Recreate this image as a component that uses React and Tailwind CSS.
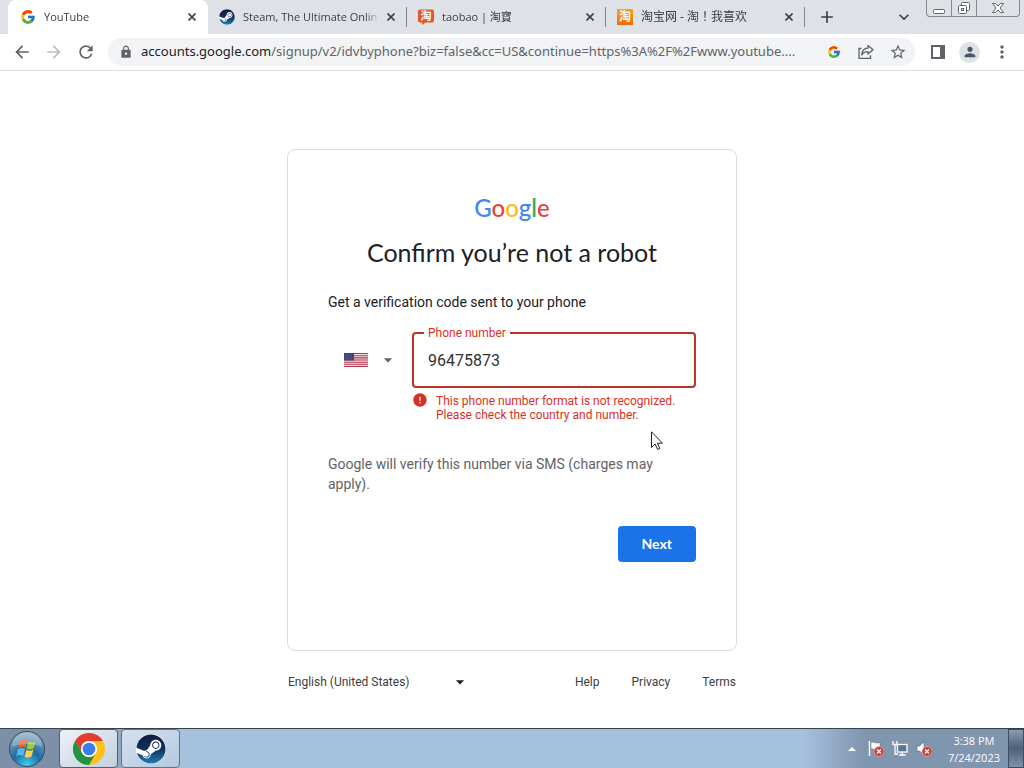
import { FaSteam } from "react-icons/fa";
import { FcGoogle } from "react-icons/fc";
import {
  MdAdd,
  MdArrowBack,
  MdArrowDropDown,
  MdArrowForward,
  MdError,
  MdExpandMore,
  MdLock,
  MdMoreVert,
  MdPerson,
  MdRefresh,
  MdStarBorder,
} from "react-icons/md";

const tabs = [
  { title: "YouTube", icon: <FcGoogle className="size-4" />, active: true },
  { title: "Steam, The Ultimate Onlin", icon: <SteamIcon className="size-4" /> },
  { title: "taobao | 淘寶", icon: <TaobaoBubble /> },
  { title: "淘宝网 - 淘！我喜欢", icon: <TaobaoSquare />, size: "text-xs" },
];

function SteamIcon({ className }) {
  return (
    <span className={`flex shrink-0 rounded-full bg-white ${className}`}>
      <FaSteam className="size-full fill-[url(#steam)]" />
    </span>
  );
}

function TaobaoBubble() {
  return (
    <svg viewBox="0 0 16 16" className="size-4">
      <path
        d="M2 .5h12a2 2 0 0 1 2 2v9a2 2 0 0 1-2 2H7.500L4.500 16l-.5-2.500H2a2 2 0 0 1-2-2v-9a2 2 0 0 1 2-2z"
        fill="#e4572e"
      />
      <text x="8" y="11" textAnchor="middle" fontSize="11" fontWeight="700" fill="#fff">
        淘
      </text>
    </svg>
  );
}

function TaobaoSquare() {
  return (
    <span className="flex size-4 items-center justify-center bg-linear-to-b from-[#f9a01b] to-[#ee6c0c] text-xs leading-4 font-bold text-white">
      淘
    </span>
  );
}

function Tab({ title, icon, active, size = "text-[11px]" }) {
  return (
    <div
      className={
        active
          ? "flex h-full w-[200px] items-center rounded-t-lg bg-white pr-2 pl-3"
          : "flex h-full w-[199px] items-center pr-2 pl-[11px]"
      }
    >
      <span className="flex shrink-0">{icon}</span>
      <span
        className={`ml-2 flex-1 overflow-hidden mask-r-from-90% leading-5 whitespace-nowrap ${size}`}
      >
        {title}
      </span>
      <button aria-label="Close tab" className="ml-1 flex size-4 items-center justify-center">
        <svg viewBox="0 0 8 8" className="size-2" stroke="currentColor" strokeWidth="1.6">
          <path d="M.5.5l7 7M7.500.5l-7 7" />
        </svg>
      </button>
      {!active && <span className="-mr-2 ml-[7px] h-5 w-px bg-[#80868b]" />}
    </div>
  );
}

function WindowButtons() {
  return (
    <div className="mr-1 flex h-[17px] self-start rounded-b border border-t-0 border-[#85898f] text-[#606468]">
      <button aria-label="Minimize" className="flex w-[25px] items-center justify-center border-r border-[#85898f]">
        <svg viewBox="0 0 14 14" className="size-3.5" fill="#fff" stroke="currentColor">
          <rect x="1.5" y="8.5" width="11" height="4" rx="1" />
        </svg>
      </button>
      <button aria-label="Restore" className="flex w-[25px] items-center justify-center border-r border-[#85898f]">
        <svg viewBox="0 0 14 14" className="size-3.5" fill="#fff" stroke="currentColor">
          <rect x="4.5" y="1.5" width="8" height="8" rx="1" />
          <rect x="1.5" y="4.5" width="8" height="8" rx="1" />
          <rect x="4.5" y="7.5" width="2" height="2" />
        </svg>
      </button>
      <button aria-label="Close" className="flex w-[42px] items-center justify-center">
        <svg viewBox="0 0 14 14" className="size-3.5" fill="#fff" stroke="currentColor">
          <path d="M1.5 2.5h3.2L7 5l2.3-2.5h3.2L9 7l3.5 4.5H9.3L7 9l-2.3 2.5H1.5L5 7z" />
        </svg>
      </button>
    </div>
  );
}

function TabStrip() {
  return (
    <div className="flex h-[34px] items-center bg-[#dee1e6] pl-2 font-['Open_Sans','Noto_Sans_CJK_TC',sans-serif] text-[#3c4043]">
      {tabs.map((tab) => (
        <Tab key={tab.title} {...tab} />
      ))}
      <button aria-label="New tab" className="ml-3">
        <MdAdd className="size-5" />
      </button>
      <button aria-label="Search tabs" className="mr-3 ml-auto">
        <MdExpandMore className="size-5" />
      </button>
      <WindowButtons />
    </div>
  );
}

function Toolbar() {
  return (
    <div className="flex h-[37px] items-center border-b border-[#dadce0] bg-white px-3 text-[#5f6368]">
      <button aria-label="Back">
        <MdArrowBack className="size-5" />
      </button>
      <button aria-label="Forward" className="ml-3 text-[#babcbe]">
        <MdArrowForward className="size-5" />
      </button>
      <button aria-label="Reload" className="ml-3">
        <MdRefresh className="size-5" />
      </button>
      <div className="ml-3 flex h-7 min-w-0 flex-1 items-center rounded-full bg-[#f1f3f4] pr-2 pl-[11px]">
        <MdLock className="size-3.5 shrink-0" />
        <p className="ml-2 flex-1 truncate font-['Noto_Sans',sans-serif] text-[13px]">
          <span className="text-[#202124]">accounts.google.com</span>
          /signup/v2/idvbyphone?biz=false&amp;cc=US&amp;continue=https%3A%2F%2Fwww.youtube....
        </p>
        <FcGoogle className="ml-2 size-3.5 shrink-0" />
        <button aria-label="Share" className="ml-4">
          <svg viewBox="0 0 18 18" className="size-[18px]" fill="none" stroke="currentColor" strokeWidth="1.3">
            <path d="M4.5 5.5H2v9.8h11.5v-3" />
            <path d="M11 2.5l5 4.3-5 4.3V8.7c-3 0-5 1-6.300 3.300C5 8 7 5.400 11 5z" strokeLinejoin="round" />
          </svg>
        </button>
        <button aria-label="Bookmark" className="ml-3.5">
          <MdStarBorder className="size-[18px]" />
        </button>
      </div>
      <button aria-label="Side panel" className="ml-4">
        <svg viewBox="0 0 14 14" className="size-3.5" fill="currentColor">
          <path d="M0 0h14v14H0zM2 2v10h7V2z" fillRule="evenodd" />
        </svg>
      </button>
      <button aria-label="Profile" className="ml-3.5 flex size-[21px] items-center justify-center rounded-full bg-[#dee1e6] text-[#4a5568]">
        <MdPerson className="size-4" />
      </button>
      <button aria-label="Menu" className="ml-3">
        <MdMoreVert className="size-5" />
      </button>
    </div>
  );
}

function UsFlag() {
  return (
    <svg viewBox="0 0 24 14" className="h-3.5 w-6">
      <rect width="24" height="14" fill="#f3dfe2" />
      <path
        d="M0 .5h24M0 2.700h24M0 4.900h24M0 7h24M0 9.200h24M0 11.300h24M0 13.500h24"
        stroke="#b5374b"
        strokeWidth="1.100"
      />
      <rect width="10" height="7.500" fill="#3b4476" />
      <path d="M1 2h8M1 4h8M1 6h8" stroke="#8087ab" strokeWidth=".6" strokeDasharray=".8 .8" />
    </svg>
  );
}

function GoogleLogo() {
  return (
    <p className="text-center font-[Lato,sans-serif] text-2xl leading-8 font-medium">
      <span className="text-[#4285f4]">G</span>
      <span className="text-[#ea4335]">o</span>
      <span className="text-[#fbbc05]">o</span>
      <span className="text-[#4285f4]">g</span>
      <span className="text-[#34a853]">l</span>
      <span className="text-[#ea4335]">e</span>
    </p>
  );
}

function Cursor() {
  return (
    <svg viewBox="0 0 12 19" className="absolute top-[281px] left-[363px] h-[19px] w-3">
      <path
        d="M.5.800v15.700l3.600-3.500 2.500 5.500 2.300-1-2.500-5.300h5z"
        fill="#fff"
        stroke="#222"
      />
    </svg>
  );
}

function SignupCard() {
  return (
    <form className="relative flex min-h-[502px] flex-col rounded-lg border border-[#dadce0] px-10 pt-[42px]">
      <GoogleLogo />
      <h1 className="mt-3 text-center font-[Lato,sans-serif] text-[25px] leading-8">
        Confirm you’re not a robot
      </h1>
      <p className="mt-6 text-sm leading-5">Get a verification code sent to your phone</p>
      <div className="mt-5 flex">
        <button
          type="button"
          aria-label="Country: United States"
          className="flex h-14 w-[84px] items-center gap-2.5 pl-4 text-[#5f6368]"
        >
          <UsFlag />
          <MdArrowDropDown className="size-5" />
        </button>
        <div className="relative flex-1">
          <input
            id="phone"
            type="tel"
            defaultValue="96475873"
            aria-describedby="phone-error"
            className="h-14 w-full rounded border-2 border-[#bb3529] px-3.5 text-base text-[#303134] outline-none"
          />
          <label htmlFor="phone" className="absolute -top-[7px] left-3 bg-white px-1 text-xs text-[#d93025]">
            Phone number
          </label>
        </div>
      </div>
      <div id="phone-error" className="mt-1 ml-[84px] flex gap-2 text-xs leading-3.5 text-[#d93025]">
        <MdError className="size-4 shrink-0" />
        <p className="pt-0.5">
          This phone number format is not recognized.
          <br />
          Please check the country and number.
        </p>
      </div>
      <p className="mt-8 text-sm leading-5 text-[#5f6368]">
        Google will verify this number via SMS (charges may apply).
      </p>
      <button
        type="button"
        className="mt-8 h-9 self-end rounded bg-[#1a73e8] px-6 font-[Lato,sans-serif] text-sm font-bold text-white"
      >
        Next
      </button>
      <Cursor />
    </form>
  );
}

function Footer() {
  return (
    <footer className="mt-[19px] flex items-center justify-between px-px text-xs text-[#3c4043]">
      <div className="relative">
        <select aria-label="Language" className="h-6 w-[182px] appearance-none">
          <option>English (United States)</option>
        </select>
        <MdArrowDropDown className="pointer-events-none absolute top-0.5 right-0 size-5 text-[#202124]" />
      </div>
      <nav className="flex gap-8">
        <a href="#help">Help</a>
        <a href="#privacy">Privacy</a>
        <a href="#terms">Terms</a>
      </nav>
    </footer>
  );
}

function StartOrb() {
  return (
    <svg viewBox="0 0 38 38" className="size-[38px]">
      <defs>
        <radialGradient id="orb" cx=".5" cy=".95" r=".9">
          <stop offset="0" stopColor="#3fd0f0" />
          <stop offset=".45" stopColor="#1c6ca3" />
          <stop offset="1" stopColor="#8fa6bb" />
        </radialGradient>
      </defs>
      <circle cx="19" cy="19" r="17.500" fill="url(#orb)" stroke="#34495f" />
      <path d="M12 11c2.500-1.600 4.800-1.600 7-.2l-1.700 7c-2.300-1.400-4.600-1.300-7 .2z" fill="#e8632b" />
      <path d="M20.300 11.500c2.400 1.400 4.800 1.300 7.200-.2l-1.800 7c-2.400 1.500-4.700 1.500-7 .2z" fill="#9ccc3c" />
      <path d="M10 19.300c2.400-1.500 4.700-1.500 7-.2l-1.800 7c-2.300-1.400-4.600-1.300-7 .2z" fill="#5db7ea" />
      <path d="M18.300 19.800c2.400 1.400 4.700 1.300 7.100-.2l-1.800 7c-2.400 1.500-4.700 1.500-7 .2z" fill="#fdd04a" />
      <path d="M4 17a15 15 0 0 1 30 0c-8-4-22-4-30 0z" fill="#fff" opacity=".25" />
    </svg>
  );
}

function ChromeIcon() {
  return (
    <svg viewBox="0 0 48 48" className="size-8">
      <circle cx="24" cy="24" r="24" fill="#fbc116" />
      <path d="M3.200 12A24 24 0 0 1 44.800 12H24a12 12 0 0 0-10.400 18z" fill="#e33b2e" />
      <path d="M3.200 12A24 24 0 0 0 24 48l10.400-18a12 12 0 0 1-20.800 0z" fill="#229342" />
      <circle cx="24" cy="24" r="12" fill="#fff" />
      <circle cx="24" cy="24" r="9.500" fill="#3b7ded" />
    </svg>
  );
}

function RedCross() {
  return (
    <g>
      <circle cx="11" cy="11.500" r="5" fill="#d13a35" stroke="#f0c4c0" strokeWidth=".6" />
      <path d="M9 9.500l4 4M13 9.500l-4 4" stroke="#fff" strokeWidth="1.500" />
    </g>
  );
}

function Tray() {
  return (
    <div className="ml-auto flex h-full items-center font-['Open_Sans',sans-serif] text-[11px] text-white">
      <svg viewBox="0 0 8 4" className="h-1 w-2" fill="#fff">
        <path d="M0 4l4-4 4 4z" />
      </svg>
      <svg viewBox="0 0 16 17" className="ml-3 h-[17px] w-4">
        <path d="M1.500 1v15" stroke="#fff" strokeWidth="1.500" />
        <path d="M3 2.500c3-1.500 4 1.500 9 0v7c-5 1.500-6-1.500-9 0z" fill="#fff" stroke="#44576e" strokeWidth=".5" />
        <RedCross />
      </svg>
      <svg viewBox="0 0 16 17" className="ml-2 h-[17px] w-4" fill="none" stroke="#fff" strokeWidth="1.300">
        <rect x="5.500" y="4.500" width="9.500" height="7.500" fill="#5c7490" />
        <path d="M10.200 12v3M7 15h6.500M1 1v3.500h4V1M3 4.500V14h3" />
      </svg>
      <svg viewBox="0 0 16 17" className="ml-2 h-[17px] w-4">
        <path d="M1 6h2.500L8 2v13l-4.500-4H1z" fill="#fff" stroke="#44576e" strokeWidth=".5" />
        <RedCross />
      </svg>
      <div className="ml-4 text-center leading-[17px]">
        <p>3:38 PM</p>
        <p>7/24/2023</p>
      </div>
      <button
        aria-label="Show desktop"
        className="ml-2 h-full w-4 border border-[#3d4d60] bg-linear-to-b from-[#8b9db3] via-[#4d6078] to-[#7e92ab]"
      />
    </div>
  );
}

function Taskbar() {
  return (
    <div className="flex h-10 items-center border-t border-[#35404d] bg-[linear-gradient(to_right,#7c90a8_60px,#a6c1dd_182px,#a6c1dd_calc(100%-220px),#8095ae_calc(100%-160px))]">
      <button aria-label="Start" className="ml-2">
        <StartOrb />
      </button>
      <button
        aria-label="Chrome"
        className="ml-[13px] flex h-full w-[59px] items-center justify-center rounded-sm border border-[#4d5f75] bg-linear-to-br from-[#eef2f7] to-[#c3d0df]"
      >
        <ChromeIcon />
      </button>
      <button
        aria-label="Steam"
        className="ml-[3px] flex h-full w-[59px] items-center justify-center rounded-sm border border-[#5d7290] bg-linear-to-br from-[#d5e1ef] to-[#b5c8de]"
      >
        <SteamIcon className="size-[30px]" />
      </button>
      <Tray />
    </div>
  );
}

export default function App() {
  return (
    <div className="flex min-h-screen flex-col bg-white font-[Roboto,sans-serif] text-[#202124]">
      <svg className="absolute size-0" aria-hidden="true">
        <linearGradient id="steam" x1="0" y1="0" x2="0" y2="1">
          <stop offset="0" stopColor="#101c3d" />
          <stop offset=".5" stopColor="#12305c" />
          <stop offset="1" stopColor="#1f7fb5" />
        </linearGradient>
      </svg>
      <TabStrip />
      <Toolbar />
      <main className="mx-auto w-full max-w-[450px] flex-1 pt-[78px]">
        <SignupCard />
        <Footer />
      </main>
      <Taskbar />
    </div>
  );
}
